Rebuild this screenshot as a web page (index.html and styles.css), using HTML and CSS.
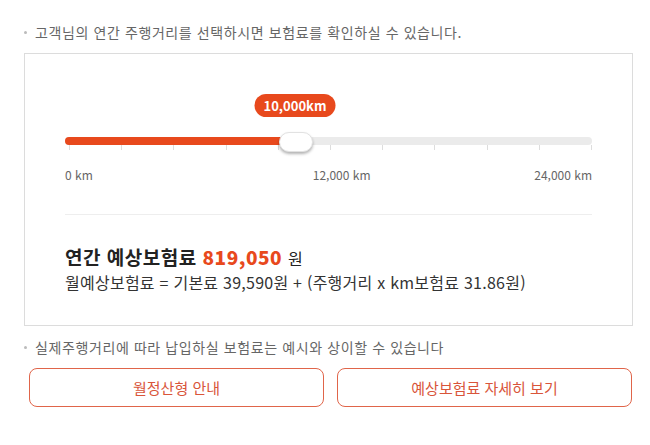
FILE: index.html
```
<!DOCTYPE html>
<html lang="ko">
<head>
  <meta charset="UTF-8">
  <title>예상보험료 계산</title>
  <link rel="stylesheet" href="styles.css">
</head>
<body>
  <div class="wrap">
    <p class="note">고객님의 연간 주행거리를 선택하시면 보험료를 확인하실 수 있습니다.</p>

    <div class="card">
      <div class="slider">
        <div class="bubble" style="left: 230px">10,000km</div>
        <div class="track">
          <div class="fill" style="width: 230px"></div>
          <div class="thumb" style="left: 230px"></div>
        </div>
        <div class="ticks">
          <span></span><span></span><span></span><span></span><span></span><span></span>
          <span></span><span></span><span></span><span></span><span></span>
        </div>
        <div class="scale">
          <span>0 km</span>
          <span class="scale-mid">12,000 km</span>
          <span class="scale-end">24,000 km</span>
        </div>
      </div>

      <div class="result">
        <p class="total">연간 예상보험료 <strong>819,050</strong> <span class="won">원</span></p>
        <p class="formula">월예상보험료 = 기본료 39,590원 + (주행거리 x km보험료 31.86원)</p>
      </div>
    </div>

    <p class="note">실제주행거리에 따라 납입하실 보험료는 예시와 상이할 수 있습니다</p>

    <div class="actions">
      <button class="btn">월정산형 안내</button>
      <button class="btn">예상보험료 자세히 보기</button>
    </div>
  </div>
</body>
</html>
```

FILE: styles.css
```
body {
  margin: 0;
  background: #fff;
  font-family: "Noto Sans CJK KR", "Noto Sans", sans-serif;
  color: #222;
}
.wrap {
  padding: 22px 17px 0 24px;
}
.note {
  position: relative;
  margin: 0;
  padding-left: 11px;
  font-size: 14px;
  letter-spacing: 0.6px;
  line-height: 20px;
  color: #666;
}
.note::before {
  content: "";
  position: absolute;
  left: 0;
  top: 9px;
  width: 3px;
  height: 3px;
  border-radius: 50%;
  background: #bbb;
}
.card {
  margin-top: 11px;
  border: 1px solid #dcdcdc;
  padding: 40px 40px 0 40px;
  height: 231px;
}
.slider {
  position: relative;
  padding-top: 43px;
}
.bubble {
  position: absolute;
  top: 0;
  transform: translateX(-50%);
  background: #e8491d;
  color: #fff;
  font-weight: bold;
  font-size: 13px;
  line-height: 23px;
  height: 23px;
  padding: 0 9px;
  border-radius: 12px;
  white-space: nowrap;
}
.track {
  position: relative;
  height: 8px;
  border-radius: 4px;
  background: #ebebeb;
}
.fill {
  height: 8px;
  border-radius: 4px;
  background: #e8491d;
}
.thumb {
  position: absolute;
  top: -5px;
  width: 32px;
  height: 18px;
  margin-left: -16px;
  background: #fff;
  border: 1px solid #e2e2e2;
  border-radius: 10px;
  box-shadow: 0 2px 3px rgba(0, 0, 0, 0.3);
}
.ticks {
  display: flex;
  justify-content: space-between;
  padding: 0 0 0 4px;
  height: 5px;
}
.ticks span {
  width: 1px;
  background: #ddd;
}
.scale {
  display: flex;
  margin-top: 17px;
  font-size: 12px;
  line-height: 16px;
  color: #666;
}
.scale-mid {
  margin-left: 220px;
}
.scale-end {
  margin-left: auto;
}
.result {
  margin-top: 31px;
  border-top: 1px solid #eee;
  padding-top: 29px;
}
.total {
  margin: 0;
  font-size: 19px;
  letter-spacing: 0.5px;
  font-weight: bold;
  line-height: 25px;
  color: #222;
}
.total strong {
  color: #e8491d;
}
.total .won {
  font-weight: normal;
  font-size: 16px;
}
.formula {
  margin: 0;
  font-size: 16px;
  letter-spacing: 0.25px;
  line-height: 22px;
  color: #333;
}
.card + .note {
  margin-top: 11px;
}
.actions {
  display: flex;
  gap: 13px;
  margin-top: 11px;
  padding-left: 5px;
  padding-right: 1px;
}
.btn {
  flex: 1;
  height: 39px;
  background: #fff;
  border: 1px solid #e0654a;
  border-radius: 8px;
  color: #d9553a;
  font-family: inherit;
  font-size: 15px;
  cursor: pointer;
}
```
